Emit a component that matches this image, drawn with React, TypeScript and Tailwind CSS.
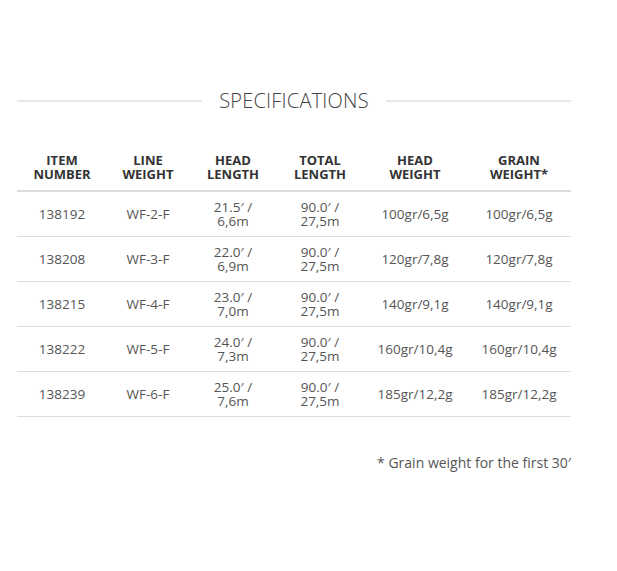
const rows = [
  ["138192", "WF-2-F", ["21.5′ /", "6,6m"], ["90.0′ /", "27,5m"], "100gr/6,5g", "100gr/6,5g"],
  ["138208", "WF-3-F", ["22.0′ /", "6,9m"], ["90.0′ /", "27,5m"], "120gr/7,8g", "120gr/7,8g"],
  ["138215", "WF-4-F", ["23.0′ /", "7,0m"], ["90.0′ /", "27,5m"], "140gr/9,1g", "140gr/9,1g"],
  ["138222", "WF-5-F", ["24.0′ /", "7,3m"], ["90.0′ /", "27,5m"], "160gr/10,4g", "160gr/10,4g"],
  ["138239", "WF-6-F", ["25.0′ /", "7,6m"], ["90.0′ /", "27,5m"], "185gr/12,2g", "185gr/12,2g"],
] as const;

const headers = [
  ["ITEM", "NUMBER"],
  ["LINE", "WEIGHT"],
  ["HEAD", "LENGTH"],
  ["TOTAL", "LENGTH"],
  ["HEAD", "WEIGHT"],
  ["GRAIN", "WEIGHT*"],
];

const widths = ["w-[90px]", "w-[82px]", "w-[88px]", "w-[86px]", "w-[104px]", "w-[104px]"];

function Cell({ value }: { value: string | readonly string[] }) {
  if (typeof value === "string") return <>{value}</>;
  return (
    <>
      {value[0]}
      <br />
      {value[1]}
    </>
  );
}

export default function App() {
  return (
    <div className="min-h-screen bg-white font-['Open_Sans',sans-serif] pt-[88px]">
      <div className="ml-[17px] w-[554px]">
        {/* Title */}
        <div className="flex items-center">
          <div className="flex-grow h-[2px] bg-[#e8e8e8]" />
          <h2 className="mx-[17px] text-[20px] font-light text-[#444] leading-[26px] tracking-[0.2px]">
            SPECIFICATIONS
          </h2>
          <div className="flex-grow h-[2px] bg-[#e8e8e8]" />
        </div>

        {/* Table */}
        <table className="mt-[19px] w-full border-collapse table-fixed">
          <thead>
            <tr className="border-b-2 border-[#dcdcdc]">
              {headers.map((h, i) => (
                <th
                  key={i}
                  className={`${widths[i]} pt-[20px] pb-[9px] text-center text-[13px] font-bold leading-[14px] text-[#333]`}
                >
                  {h[0]}
                  <br />
                  {h[1]}
                </th>
              ))}
            </tr>
          </thead>
          <tbody>
            {rows.map((r, i) => (
              <tr key={i} className="border-b border-[#dddddd] h-[45px]">
                {r.map((v, j) => (
                  <td
                    key={j}
                    className="text-center align-middle text-[13.5px] leading-[14px] text-[#555]"
                  >
                    <Cell value={v} />
                  </td>
                ))}
              </tr>
            ))}
          </tbody>
        </table>

        <p className="mt-[36px] text-right text-[14px] text-[#555] leading-[20px]">
          * Grain weight for the first 30′
        </p>
      </div>
    </div>
  );
}
